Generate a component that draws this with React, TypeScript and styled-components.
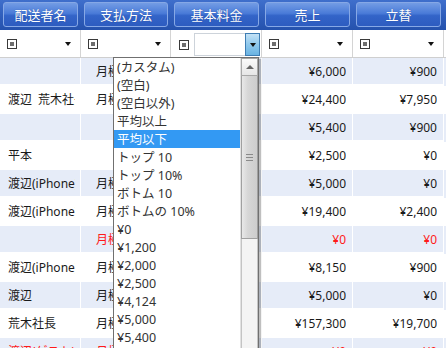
import React from 'react';
import styled, { createGlobalStyle, css } from 'styled-components';

const GlobalStyle = createGlobalStyle`
  html, body {
    margin: 0;
    padding: 0;
    background: #fff;
    overflow: hidden;
  }
  body {
    font-family: "Noto Sans", "Noto Sans CJK JP", sans-serif;
  }
`;

const COLS = '81px 90px 91px 91px 91px';

interface Row {
  name: string;
  pay: string;
  sales: string;
  adv: string;
  red?: boolean;
}

const rows: Row[] = [
  { name: '', pay: '月極', sales: '¥6,000', adv: '¥900' },
  { name: '渡辺\u2002荒木社長', pay: '月極', sales: '¥24,400', adv: '¥7,950' },
  { name: '', pay: '', sales: '¥5,400', adv: '¥900' },
  { name: '平本', pay: '', sales: '¥2,500', adv: '¥0' },
  { name: '渡辺(iPhone)', pay: '月極', sales: '¥5,000', adv: '¥0' },
  { name: '渡辺(iPhone)', pay: '月極', sales: '¥19,400', adv: '¥2,400' },
  { name: '', pay: '月極', sales: '¥0', adv: '¥0', red: true },
  { name: '渡辺(iPhone)', pay: '月極', sales: '¥8,150', adv: '¥900' },
  { name: '渡辺', pay: '月極', sales: '¥5,000', adv: '¥0' },
  { name: '荒木社長', pay: '月極', sales: '¥157,300', adv: '¥19,700' },
  { name: '渡辺(ゲスト)', pay: '月極', sales: '¥0', adv: '¥0', red: true },
];

const options = [
  '(カスタム)',
  '(空白)',
  '(空白以外)',
  '平均以上',
  '平均以下',
  'トップ 10',
  'トップ 10%',
  'ボトム 10',
  'ボトムの 10%',
  '¥0',
  '¥1,200',
  '¥2,000',
  '¥2,500',
  '¥4,124',
  '¥5,000',
  '¥5,400',
  '¥6,000',
];

const headers = ['配送者名', '支払方法', '基本料金', '売上', '立替'];

const App: React.FC = () => {
  return (
    <>
      <GlobalStyle />
      <Page>
        <HeaderBar>
          {headers.map((h) => (
            <HeaderButton key={h}>{h}</HeaderButton>
          ))}
        </HeaderBar>

        <FilterRow>
          {[0, 1, 2, 3, 4].map((i) =>
            i === 2 ? (
              <FilterCell key={i} $wide>
                <CheckIcon />
                <FilterInput />
                <DropButton>
                  <Arrow />
                </DropButton>
              </FilterCell>
            ) : (
              <FilterCell key={i}>
                <CheckIcon />
                <Arrow $push />
              </FilterCell>
            )
          )}
        </FilterRow>

        {rows.map((r, i) => (
          <DataRow key={i} $alt={i % 2 === 0}>
            <Cell $red={r.red}>
              <CellText>{r.name}</CellText>
            </Cell>
            <Cell $red={r.red} $indent>
              <CellText>{r.pay}</CellText>
            </Cell>
            <Cell />
            <Cell $red={r.red} $right>
              <CellText>{r.sales}</CellText>
            </Cell>
            <Cell $red={r.red} $right>
              <CellText>{r.adv}</CellText>
            </Cell>
          </DataRow>
        ))}

        <DropList>
          <Items>
            {options.map((o, i) => (
              <Item key={o} $active={i === 4}>
                {o}
              </Item>
            ))}
          </Items>
          <ScrollBar>
            <ScrollUp>
              <UpArrow />
            </ScrollUp>
            <ScrollThumb>
              <Grip />
            </ScrollThumb>
            <ScrollTrack />
          </ScrollBar>
        </DropList>
      </Page>
    </>
  );
};

export default App;

const Page = styled.div`
  position: relative;
  width: 446px;
  height: 348px;
  overflow: hidden;
  background: #fff;
`;

const HeaderBar = styled.div`
  display: grid;
  grid-template-columns: ${COLS};
  height: 30px;
  background: linear-gradient(to bottom, #3f6fcc 0%, #2e5cb9 60%, #2552ad 100%);
`;

const HeaderButton = styled.div`
  margin: 2px 3px 3px;
  border: 1px solid #86a8e6;
  border-radius: 3px;
  background: linear-gradient(to bottom, #739ce4 0%, #4a7bd8 45%, #3364c8 55%, #2d5cc0 100%);
  color: #fff;
  font-size: 13px;
  display: flex;
  align-items: center;
  justify-content: center;
  text-shadow: 0 0 1px rgba(20, 50, 120, 0.6);
`;

const FilterRow = styled.div`
  display: grid;
  grid-template-columns: ${COLS};
  height: 27px;
  border-bottom: 1px solid #cfcfcf;
  background: #fff;
`;

const FilterCell = styled.div<{ $wide?: boolean }>`
  display: flex;
  align-items: center;
  padding: 0 7px;
  border-right: 1px solid #d4d4d4;
  ${(p) =>
    p.$wide &&
    css`
      padding: 2px 1px 0 8px;
      gap: 4px;
    `}
`;

const CheckIcon = styled.span`
  flex: none;
  width: 8px;
  height: 8px;
  border: 1px solid #3a3a3a;
  display: flex;
  align-items: center;
  justify-content: center;
  &::after {
    content: '';
    width: 4px;
    height: 4px;
    background: #6e6e6e;
  }
`;

const Arrow = styled.span<{ $push?: boolean }>`
  width: 0;
  height: 0;
  border-left: 3.5px solid transparent;
  border-right: 3.5px solid transparent;
  border-top: 4px solid #111;
  ${(p) =>
    p.$push &&
    css`
      margin-left: auto;
      margin-right: 2px;
    `}
`;

const FilterInput = styled.div`
  flex: 1;
  height: 21px;
  border: 1px solid #cdd3da;
  border-right: none;
  margin-left: 1px;
  background: #fff;
`;

const DropButton = styled.div`
  flex: none;
  width: 13px;
  height: 21px;
  margin-left: -4px;
  border: 1px solid #3e7db3;
  background: linear-gradient(to bottom, #c3e2f6 0%, #8fc8ec 50%, #6ab3e2 100%);
  display: flex;
  align-items: center;
  justify-content: center;
`;

const DataRow = styled.div<{ $alt?: boolean }>`
  display: grid;
  grid-template-columns: ${COLS};
  height: 28px;
  background: ${(p) => (p.$alt ? '#e6ecf8' : '#fff')};
`;

const Cell = styled.div<{ $red?: boolean; $right?: boolean; $indent?: boolean }>`
  min-width: 0;
  font-size: 12px;
  line-height: 24px;
  padding-top: 2px;
  color: ${(p) => (p.$red ? '#ff1a1a' : '#1a1a1a')};
  border-bottom: 2px solid #fff;
  border-right: 1px solid #fff;
  padding-left: ${(p) => (p.$indent ? '15px' : '8px')};
  padding-right: ${(p) => (p.$right ? '6px' : '5px')};
  text-align: ${(p) => (p.$right ? 'right' : 'left')};
`;

const CellText = styled.span`
  display: block;
  white-space: nowrap;
  overflow: hidden;
`;

const DropList = styled.div`
  position: absolute;
  left: 113px;
  top: 57px;
  width: 144px;
  height: 300px;
  display: flex;
  background: #fff;
  border: 1px solid #707070;
  box-shadow: 2px 2px 1px rgba(0, 0, 0, 0.25);
`;

const Items = styled.div`
  flex: 1;
  overflow: hidden;
`;

const Item = styled.div<{ $active?: boolean }>`
  height: 18px;
  line-height: 19px;
  padding-left: 3px;
  font-size: 12.5px;
  white-space: nowrap;
  color: ${(p) => (p.$active ? '#fff' : '#333')};
  background: ${(p) => (p.$active ? '#3399f3' : 'transparent')};
`;

const ScrollBar = styled.div`
  width: 17px;
  display: flex;
  flex-direction: column;
  background: #f3f3f3;
  border-left: 1px solid #e2e2e2;
`;

const ScrollUp = styled.div`
  height: 16px;
  border: 1px solid #a8a8a8;
  background: linear-gradient(to bottom, #fafafa 0%, #e6e6e6 100%);
  display: flex;
  align-items: center;
  justify-content: center;
`;

const UpArrow = styled.span`
  width: 0;
  height: 0;
  border-left: 4px solid transparent;
  border-right: 4px solid transparent;
  border-bottom: 4px solid #666;
`;

const ScrollThumb = styled.div`
  height: 162px;
  border: 1px solid #a0a0a0;
  border-top: none;
  background: linear-gradient(to right, #e8e8e8 0%, #d6d6d6 40%, #cdcdcd 100%);
  display: flex;
  align-items: center;
  justify-content: center;
`;

const Grip = styled.span`
  width: 7px;
  height: 5px;
  border-top: 1px solid #8a8a8a;
  border-bottom: 1px solid #8a8a8a;
  position: relative;
  &::after {
    content: '';
    position: absolute;
    left: 0;
    right: 0;
    top: 2px;
    height: 1px;
    background: #8a8a8a;
  }
`;

const ScrollTrack = styled.div`
  flex: 1;
  background: #f4f4f4;
  border-left: 1px solid #c4c4c4;
  border-right: 1px solid #c4c4c4;
`;
